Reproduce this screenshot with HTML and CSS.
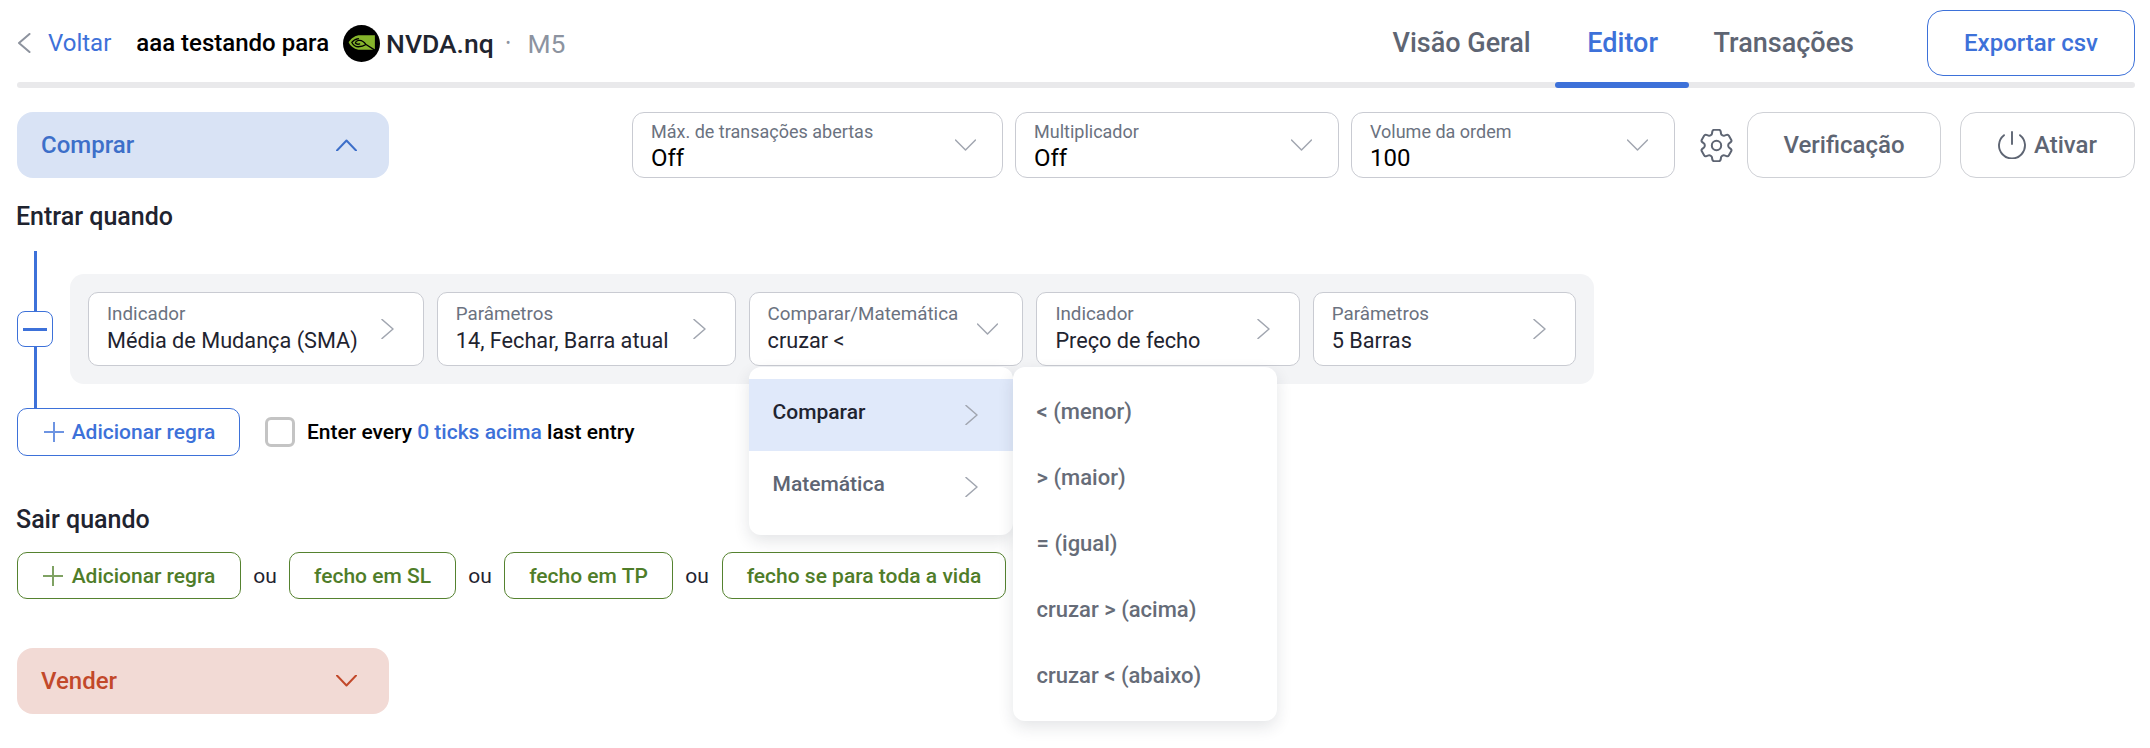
FILE: index.html
```html
<!DOCTYPE html>
<html lang="pt">
<head>
<meta charset="utf-8">
<title>Editor</title>
<link rel="stylesheet" href="styles.css">
</head>
<body>
<div class="app">
  <header class="topbar">
    <a class="back">
      <svg class="back-icon" width="14" height="20" viewBox="0 0 14 20"><path d="M12.5 1 2 10l10.5 9"/></svg>
      <span>Voltar</span>
    </a>
    <span class="strategy">aaa testando para</span>
    <svg class="logo" width="37" height="37" viewBox="0 0 36 36">
      <circle cx="18" cy="18" r="18" fill="#000"/>
      <path class="logo-mark" d="M15 10H31V24H15C10.500 23 7 20.500 5.500 17 7 14 10.500 11 15 10z"/>
      <path class="logo-swirl" d="M15 13.200C11.800 13.800 9.700 15.300 8.600 17 10 19.600 12.300 21.200 15 21.200 18 21.200 20.600 20.200 22.400 19 20.300 16 17.600 14.500 15 15 13.200 15.400 12.200 16.300 12 17.500 13 18.600 14.600 19 16.200 18.400M22.400 19 31 24.500"/>
    </svg>
    <span class="ticker">NVDA.nq</span>
    <span class="dot">•</span>
    <span class="timeframe">M5</span>
    <nav class="tabs">
      <a class="tab">Visão Geral</a>
      <a class="tab tab-active">Editor</a>
      <a class="tab">Transações</a>
    </nav>
    <button class="export">Exportar csv</button>
  </header>
  <div class="track"></div>

  <section class="toolbar">
    <div class="side side-buy">
      <span>Comprar</span>
      <svg class="chev-h" width="21" height="12" viewBox="0 0 21 12"><path d="M1 11.500 10.500 1.500 20 11.500"/></svg>
    </div>
    <div class="fields">
      <div class="field field-max">
        <div class="stack"><span class="label">Máx. de transações abertas</span><span class="value">Off</span></div>
        <svg class="chev-down" width="21" height="12" viewBox="0 0 21 12"><path d="M.5 1 10.500 11 20.500 1"/></svg>
      </div>
      <div class="field field-mult">
        <div class="stack"><span class="label">Multiplicador</span><span class="value">Off</span></div>
        <svg class="chev-down" width="21" height="12" viewBox="0 0 21 12"><path d="M.5 1 10.500 11 20.500 1"/></svg>
      </div>
      <div class="field field-vol">
        <div class="stack"><span class="label">Volume da ordem</span><span class="value">100</span></div>
        <svg class="chev-down" width="21" height="12" viewBox="0 0 21 12"><path d="M.5 1 10.500 11 20.500 1"/></svg>
      </div>
    </div>
    <svg class="gear" width="33" height="33" viewBox="2.500 2.500 19 19">
      <circle cx="12" cy="12" r="2.700"/>
      <path d="M9.594 3.940c.09-.542.56-.94 1.110-.94h2.593c.55 0 1.020.398 1.110.94l.213 1.281c.063.374.313.686.645.87.074.04.147.083.22.127.324.196.72.257 1.075.124l1.217-.456a1.125 1.125 0 011.370.49l1.296 2.247a1.125 1.125 0 01-.26 1.431l-1.003.827c-.293.24-.438.613-.431.992a6.759 6.759 0 010 .255c-.007.378.138.75.43.99l1.005.828c.424.35.534.954.26 1.430l-1.298 2.247a1.125 1.125 0 01-1.369.491l-1.217-.456c-.355-.133-.75-.072-1.076.124a6.570 6.570 0 01-.22.128c-.331.183-.581.495-.644.869l-.213 1.280c-.09.543-.56.941-1.110.941h-2.594c-.55 0-1.020-.398-1.110-.94l-.213-1.281c-.062-.374-.312-.686-.644-.87a6.520 6.520 0 01-.22-.127c-.325-.196-.72-.257-1.076-.124l-1.217.456a1.125 1.125 0 01-1.369-.49l-1.297-2.247a1.125 1.125 0 01.26-1.431l1.004-.827c.292-.24.437-.613.43-.992a6.932 6.932 0 010-.255c.007-.378-.138-.75-.43-.99l-1.004-.828a1.125 1.125 0 01-.26-1.430l1.297-2.247a1.125 1.125 0 011.370-.491l1.216.456c.356.133.751.072 1.076-.124.072-.044.146-.087.22-.128.332-.183.582-.495.644-.869l.214-1.281z"/>
    </svg>
    <button class="action action-check">Verificação</button>
    <button class="action action-on">
      <svg class="power" width="28" height="28" viewBox="0 0 28 28"><path d="M6 4.200A13 13 0 1 0 22 4.200M14 1v12"/></svg>
      <span>Ativar</span>
    </button>
  </section>

  <h2 class="heading heading-enter">Entrar quando</h2>

  <section class="rule">
    <div class="connector">
      <div class="stem stem-top"></div>
      <button class="collapse"><span class="minus"></span></button>
      <div class="stem"></div>
    </div>
    <div class="panel">
      <div class="card card-a">
        <div class="stack"><span class="label">Indicador</span><span class="value">Média de Mudança (SMA)</span></div>
        <svg class="chev-right" width="13" height="20" viewBox="0 0 13 20"><path d="M1 .5 12 10 1 19.500"/></svg>
      </div>
      <div class="card card-b">
        <div class="stack"><span class="label">Parâmetros</span><span class="value">14, Fechar, Barra atual</span></div>
        <svg class="chev-right" width="13" height="20" viewBox="0 0 13 20"><path d="M1 .5 12 10 1 19.500"/></svg>
      </div>
      <div class="card card-c">
        <div class="stack"><span class="label">Comparar/Matemática</span><span class="value">cruzar &lt;</span></div>
        <svg class="chev-down" width="21" height="12" viewBox="0 0 21 12"><path d="M.5 1 10.500 11 20.500 1"/></svg>
        <div class="menu">
          <div class="menu-row menu-row-on"><span>Comparar</span><svg class="chev-right" width="13" height="20" viewBox="0 0 13 20"><path d="M1 .5 12 10 1 19.500"/></svg></div>
          <div class="menu-row"><span>Matemática</span><svg class="chev-right" width="13" height="20" viewBox="0 0 13 20"><path d="M1 .5 12 10 1 19.500"/></svg></div>
          <div class="submenu">
            <div class="sub-item">&lt; (menor)</div>
            <div class="sub-item">&gt; (maior)</div>
            <div class="sub-item">= (igual)</div>
            <div class="sub-item">cruzar &gt; (acima)</div>
            <div class="sub-item">cruzar &lt; (abaixo)</div>
          </div>
        </div>
      </div>
      <div class="card card-d">
        <div class="stack"><span class="label">Indicador</span><span class="value">Preço de fecho</span></div>
        <svg class="chev-right" width="13" height="20" viewBox="0 0 13 20"><path d="M1 .5 12 10 1 19.500"/></svg>
      </div>
      <div class="card card-d">
        <div class="stack"><span class="label">Parâmetros</span><span class="value">5 Barras</span></div>
        <svg class="chev-right" width="13" height="20" viewBox="0 0 13 20"><path d="M1 .5 12 10 1 19.500"/></svg>
      </div>
    </div>
  </section>

  <div class="add-row">
    <button class="rule-btn rule-btn-blue">
      <svg class="plus" width="20" height="20" viewBox="0 0 20 20"><path d="M10 0v20M0 10h20"/></svg>
      <span>Adicionar regra</span>
    </button>
    <span class="check"></span>
    <span class="enter-text">Enter every <em class="link">0 ticks acima</em> last entry</span>
  </div>

  <h2 class="heading heading-exit">Sair quando</h2>

  <div class="exit-row">
    <button class="rule-btn rule-btn-green exit-add">
      <svg class="plus" width="20" height="20" viewBox="0 0 20 20"><path d="M10 0v20M0 10h20"/></svg>
      <span>Adicionar regra</span>
    </button>
    <span class="or">ou</span>
    <button class="rule-btn rule-btn-green exit-sl">fecho em SL</button>
    <span class="or">ou</span>
    <button class="rule-btn rule-btn-green exit-tp">fecho em TP</button>
    <span class="or">ou</span>
    <button class="rule-btn rule-btn-green exit-life">fecho se para toda a vida</button>
  </div>

  <div class="side side-sell">
    <span>Vender</span>
    <svg class="chev-h" width="21" height="12" viewBox="0 0 21 12"><path d="M1 .5 10.500 10.500 20 .5"/></svg>
  </div>
</div>
</body>
</html>
```
FILE: styles.css
```css
* { box-sizing: border-box; }
html, body { margin: 0; background: #fff; }
body { font-family: Roboto, "Liberation Sans", sans-serif; color: #1f2430; overflow: hidden; }
svg { fill: none; stroke-linecap: round; stroke-linejoin: round; flex: none; display: block; }
button { font-family: inherit; background: #fff; cursor: pointer; }
.app { padding: 0 15px 0 17px; height: 748px; }

.topbar { display: flex; align-items: center; height: 82px; padding-top: 4px; }
.back { display: flex; align-items: center; color: #3d71d9; font-size: 24px; }
.back-icon { stroke: #8d939e; stroke-width: 2; margin-right: 17px; }
.strategy { font-size: 24px; font-weight: 500; color: #000; margin-left: 25px; }
.logo { margin-left: 14px; }
.logo-mark { fill: #86b52b; }
.logo-swirl { stroke: #000; stroke-width: 1.300; }
.ticker { font-size: 26.500px; font-weight: 500; color: #1f2530; margin-left: 6px; }
.dot { font-size: 14px; color: #8c93a0; margin-left: 12px; }
.timeframe { font-size: 26.500px; color: #8c93a0; margin-left: 17px; }
.tabs { display: flex; gap: 25px; margin-left: auto; align-self: stretch; }
.tab { display: flex; align-items: center; justify-content: center; font-size: 27px; font-weight: 500; color: #5e6573; position: relative; }
.tab:first-child { margin-right: -1px; }
.tab-active { color: #3d71d9; width: 134px; padding-left: 2px; }
.tab-active::after { content: ""; position: absolute; left: 0; right: 0; bottom: -6px; height: 6px; background: #3d71d9; border-radius: 3px; }
.export { width: 208px; height: 66px; margin-left: 73px; border: 1.500px solid #3d71d9; border-radius: 16px; color: #3d71d9; font-size: 24px; font-weight: 500; }
.track { height: 6px; background: #e9e9eb; border-radius: 3px; }

.toolbar { display: flex; align-items: center; height: 66px; margin-top: 24px; }
.side { display: flex; align-items: center; justify-content: space-between; width: 372px; height: 66px; padding: 0 32px 0 24px; border-radius: 16px; font-size: 24px; font-weight: 500; }
.side-buy { background: #d9e3f5; color: #3d6fc9; }
.side-buy .chev-h { stroke: #3d6fc9; stroke-width: 2; }
.side-sell { background: #f2dad5; color: #c2482a; margin-top: 49px; }
.side-sell .chev-h { stroke: #c2482a; stroke-width: 2; }
.fields { display: flex; gap: 12px; margin-left: auto; }
.field { display: flex; align-items: center; justify-content: space-between; height: 66px; padding: 0 26px 0 18px; background: #fff; border: 1px solid #c9cbd2; border-radius: 12px; }
.field-max { width: 371px; }
.field-mult { width: 324px; }
.field-vol { width: 324px; }
.stack { display: flex; flex-direction: column; min-width: 0; }
.label { font-size: 18px; line-height: 22px; color: #6b7280; }
.value { font-size: 24px; line-height: 28px; color: #000; }
.field .stack { padding-top: 3px; }
.field .value { margin-top: 1px; }
.card .label { font-size: 18.800px; line-height: 21px; margin-top: 2px; }
.card .value { font-size: 21.700px; line-height: 31px; color: #1f2430; }
.chev-down { stroke: #a1a6b0; stroke-width: 1.500; }
.chev-right { stroke: #a1a6b0; stroke-width: 1.500; }
.gear { stroke: #5e6573; stroke-width: 1.150; margin: 0 14px 0 25px; }
.action { display: flex; align-items: center; justify-content: center; height: 66px; background: #fff; border: 1px solid #cfd1d6; border-radius: 16px; color: #5e6573; font-size: 24px; font-weight: 500; }
.action-check { width: 194px; }
.action-on { width: 175px; margin-left: 19px; gap: 8px; }
.power { stroke: #5e6573; stroke-width: 1.900; }

.heading { margin: 0; font-size: 25px; font-weight: 500; color: #1f2430; margin-left: -1px; }
.heading-enter { margin-top: 23px; line-height: 32px; }
.heading-exit { margin-top: 48px; line-height: 32px; }

.rule { display: flex; padding-top: 18px; height: 175px; }
.connector { display: flex; flex-direction: column; align-items: center; width: 36px; }
.stem { flex: 1; width: 3px; background: #3d71d9; }
.stem-top { flex: none; height: 60px; }
.collapse { display: flex; align-items: center; justify-content: center; width: 36px; height: 36px; padding: 0; border: 1.500px solid #3d71d9; border-radius: 8px; }
.minus { width: 24px; height: 3px; background: #3d71d9; }
.panel { display: flex; gap: 13px; align-self: flex-start; width: 1524px; height: 110px; margin: 23px 0 0 17px; padding: 18px; background: #f3f4f6; border-radius: 14px; }
.card { display: flex; align-items: center; justify-content: space-between; height: 74px; padding: 0 29px 0 18px; background: #fff; border: 1px solid #c9cbd2; border-radius: 10px; position: relative; }
.card-a { width: 336px; }
.card-b { width: 299px; }
.card-c { width: 275px; padding-right: 24px; }
.card-d { width: 263.500px; }

.menu { position: absolute; top: 74px; left: -1px; width: 264px; height: 168px; padding-top: 12px; background: #fff; border-radius: 12px; box-shadow: 0 6px 16px rgba(30, 40, 60, .12); z-index: 2; }
.menu-row { display: flex; align-items: center; justify-content: space-between; height: 72px; padding: 0 35px 0 24px; font-size: 21px; font-weight: 500; color: #5e6573; }
.menu-row span { margin-top: -6px; }
.menu-row-on { background: #e0e9fa; color: #1f2430; }
.submenu { position: absolute; top: 0; left: 264px; width: 264px; height: 354px; padding-top: 11px; background: #fff; border-radius: 12px; box-shadow: 0 6px 16px rgba(30, 40, 60, .12); }
.sub-item { display: flex; align-items: center; height: 66px; padding-left: 24px; font-size: 22px; font-weight: 500; color: #666c78; }

.add-row { display: flex; align-items: center; }
.rule-btn { display: flex; align-items: center; justify-content: center; gap: 9px; height: 48px; padding: 0; border-radius: 10px; font-size: 21px; font-weight: 500; }
.rule-btn-blue { width: 223px; padding-left: 2px; gap: 8px; border: 1.500px solid #3d71d9; color: #3d71d9; }
.rule-btn-blue .plus { stroke: #6d94e2; stroke-width: 2; }
.rule-btn-green { border: 1.500px solid #55822f; color: #4f7d29; }
.rule-btn-green .plus { stroke: #7fa263; stroke-width: 2; }
.check { width: 30px; height: 30px; margin-left: 25px; border: 3px solid #c4c4c4; border-radius: 6px; }
.enter-text { margin-left: 12px; font-size: 21px; font-weight: 500; color: #000; }
.link { font-style: normal; color: #3d71d9; }

.exit-row { display: flex; align-items: center; height: 47px; margin-top: 16px; }
.exit-add { width: 224px; height: 47px; }
.exit-sl { width: 167px; height: 47px; }
.exit-tp { width: 169px; height: 47px; }
.exit-life { width: 284px; height: 47px; margin-left: 1px; }
.or { width: 48px; text-align: center; font-size: 21px; color: #1f2430; }
```
